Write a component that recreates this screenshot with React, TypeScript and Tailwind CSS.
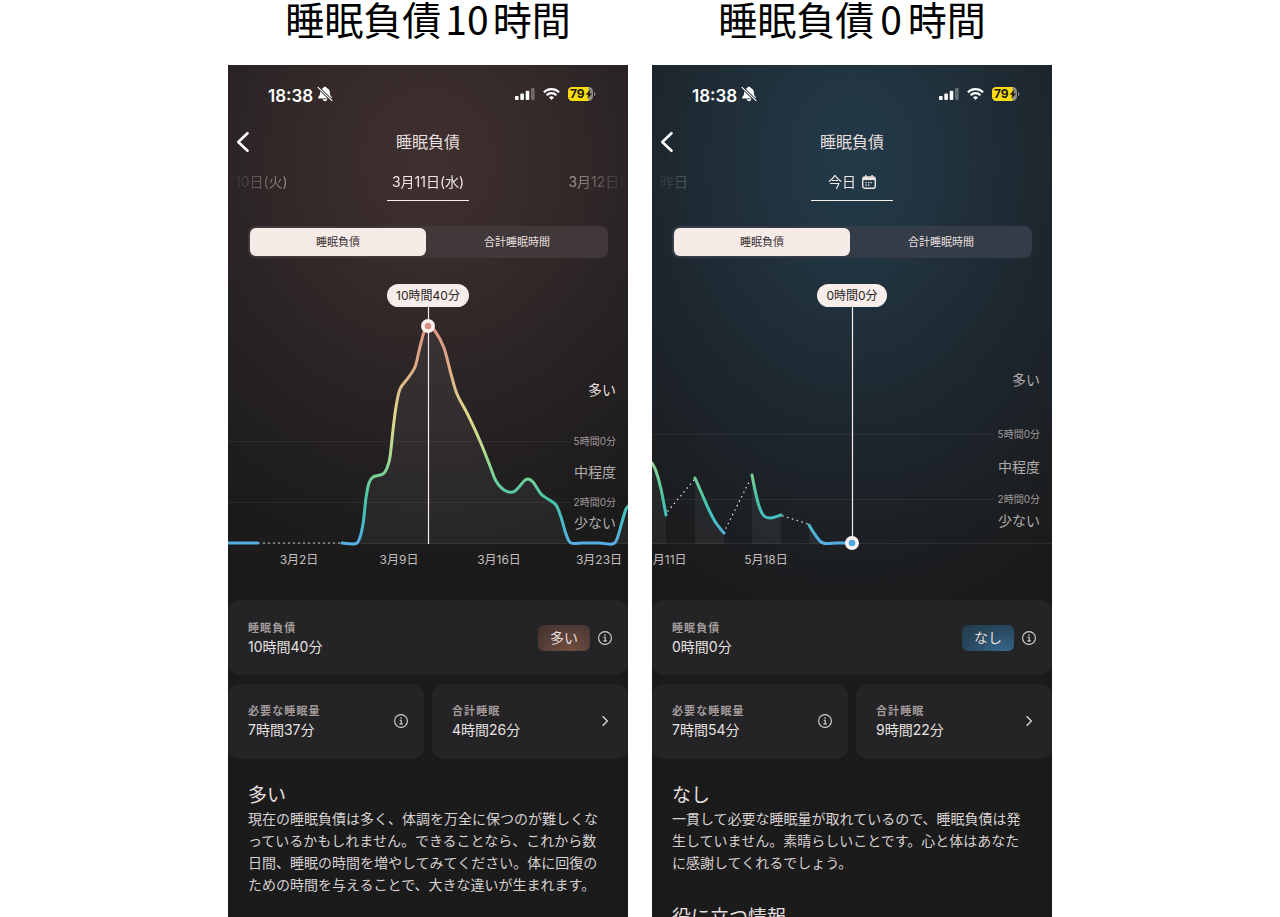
import clsx from 'clsx'

type Point = [number, number]

type Screen = {
    id: string
    count: string
    tone: 'warm' | 'cool'
    days: string[]
    debt: string
    level: string
    need: string
    total: string
    body: string
    tips?: string
    chart: {
        pillWidth: number
        grid: [number, number]
        zones: [number, number, number]
        ticks: [number, string][]
        lines: Point[][]
        dots: [Point, Point][]
        marker: { y: number; color: string }
    }
}

const BASE = 274

const screens: Screen[] = [
    {
        id: 'high',
        count: '10',
        tone: 'warm',
        days: ['3月10日(火)', '3月11日(水)', '3月12日(木)'],
        debt: '10時間40分',
        level: '多い',
        need: '7時間37分',
        total: '4時間26分',
        body: '現在の睡眠負債は多く、体調を万全に保つのが難しくなっているかもしれません。できることなら、これから数日間、睡眠の時間を増やしてみてください。体に回復のための時間を与えることで、大きな違いが生まれます。',
        chart: {
            pillWidth: 82,
            grid: [172, 233],
            zones: [120, 202, 253],
            ticks: [
                [71, '3月2日'],
                [171, '3月9日'],
                [271, '3月16日'],
                [371, '3月23日'],
            ],
            lines: [
                [
                    [0, 273],
                    [30, 273],
                ],
                [
                    [114, 273],
                    [126, 274],
                    [131, 270],
                    [135, 254],
                    [138, 228],
                    [141, 213],
                    [145, 207],
                    [155, 204],
                    [159, 198],
                    [162, 187],
                    [165, 160],
                    [168, 137],
                    [172, 119],
                    [180, 108],
                    [187, 97],
                    [191, 81],
                    [196, 62],
                    [200, 56],
                    [207, 61],
                    [216, 78],
                    [223, 104],
                    [229, 124],
                    [240, 145],
                    [252, 171],
                    [262, 196],
                    [268, 211],
                    [276, 220],
                    [285, 222],
                    [291, 217],
                    [296, 211],
                    [300, 209],
                    [305, 212],
                    [313, 224],
                    [320, 229],
                    [328, 235],
                    [333, 247],
                    [338, 264],
                    [343, 273],
                    [355, 273],
                    [371, 273],
                    [384, 274],
                    [389, 269],
                    [394, 252],
                    [398, 239],
                    [402, 235],
                ],
            ],
            dots: [[[36, 273], [112, 273]]],
            marker: { y: 56, color: '#db8f80' },
        },
    },
    {
        id: 'none',
        count: '0',
        tone: 'cool',
        days: ['昨日', '今日', ''],
        debt: '0時間0分',
        level: 'なし',
        need: '7時間54分',
        total: '9時間22分',
        body: '一貫して必要な睡眠量が取れているので、睡眠負債は発生していません。素晴らしいことです。心と体はあなたに感謝してくれるでしょう。',
        tips: '役に立つ情報',
        chart: {
            pillWidth: 70,
            grid: [165, 230],
            zones: [110, 197, 251],
            ticks: [
                [14, '5月11日'],
                [114, '5月18日'],
            ],
            lines: [
                [
                    [0, 193],
                    [4, 201],
                    [9, 219],
                    [14, 245],
                ],
                [
                    [43, 208],
                    [50, 224],
                    [57, 240],
                    [64, 253],
                    [72, 263],
                ],
                [
                    [100, 205],
                    [103, 220],
                    [107, 236],
                    [112, 246],
                    [119, 248],
                    [129, 245],
                ],
                [
                    [157, 255],
                    [164, 266],
                    [171, 273],
                    [185, 273],
                    [200, 273],
                ],
            ],
            dots: [
                [[16, 241], [42, 210]],
                [[74, 258], [98, 210]],
                [[131, 246], [156, 254]],
            ],
            marker: { y: 273, color: '#4aa5e0' },
        },
    },
]

// Catmull-Rom through the points, written as cubic beziers
function smooth(points: Point[]) {
    let d = `M${points[0][0]} ${points[0][1]}`
    for (let i = 0; i < points.length - 1; i++) {
        const a = points[i - 1] ?? points[i]
        const b = points[i]
        const c = points[i + 1]
        const e = points[i + 2] ?? c
        d += `C${b[0] + (c[0] - a[0]) / 6} ${b[1] + (c[1] - a[1]) / 6} ${c[0] - (e[0] - b[0]) / 6} ${c[1] - (e[1] - b[1]) / 6} ${c[0]} ${c[1]}`
    }
    return d
}

function area(points: Point[]) {
    return `${smooth(points)}V${BASE}H${points[0][0]}Z`
}

function InfoButton({ label }: { label: string }) {
    return (
        <button type="button" aria-label={label} className="shrink-0 text-[#d8d2d2]">
            <svg viewBox="0 0 14 14" className="size-3.5" fill="none" stroke="currentColor">
                <circle cx="7" cy="7" r="6.4" strokeWidth="1.1" />
                <path d="M5.6 6.2h1.6v3.6M5.4 9.9h3.4" strokeWidth="1.1" />
                <circle cx="7" cy="4.1" r=".8" fill="currentColor" stroke="none" />
            </svg>
        </button>
    )
}

function CalendarIcon() {
    return (
        <svg viewBox="0 0 14 14" className="size-3.5" fill="none" stroke="currentColor">
            <rect x=".7" y="2" width="12.6" height="11.3" rx="2.4" strokeWidth="1.4" />
            <path d="M1 3.8h12" strokeWidth="2.6" />
            <path d="M3.9.7v2M10.1.7v2" strokeWidth="1.6" strokeLinecap="round" />
            <path d="M3.4 7.7h7.4M3.4 10.2h5" strokeWidth="1.3" strokeDasharray="1.4 1.1" />
        </svg>
    )
}

function StatusBar({ warm }: { warm: boolean }) {
    return (
        <div className="flex h-[58px] items-center justify-between pr-8 pl-10 text-white">
            <div className="flex items-center gap-1">
                <span className="pt-1 text-[17px] leading-5 font-semibold">18:38</span>
                <svg viewBox="0 0 16 16" className="size-4">
                    <path
                        d="M8 .8c.9 0 1.5.5 1.7 1.2 2.1.7 3.2 2.4 3.2 4.5 0 2.4.6 3.3 1.7 4.4.6.7.2 1.6-.7 1.6H2.1c-.9 0-1.3-.9-.7-1.6 1.1-1.1 1.7-2 1.7-4.4 0-2.1 1.1-3.800 3.200-4.500C6.500 1.300 7.100.8 8 .8zM5.700 13.300h4.600c-.2 1.200-1.100 1.900-2.300 1.900s-2.100-.7-2.300-1.900z"
                        fill="currentColor"
                    />
                    <path d="M1 1.300 15 14.700" stroke={warm ? '#332a2b' : '#1f2d36'} strokeWidth="2.800" />
                    <path d="M1 1.300 15 14.700" stroke="currentColor" strokeWidth="1.100" strokeLinecap="round" />
                </svg>
            </div>
            <div className="flex items-center gap-2">
                <svg viewBox="0 0 20 12" className="h-3 w-5" fill="currentColor">
                    <rect x="0" y="8" width="3.600" height="4" rx="1" />
                    <rect x="5.300" y="5.600" width="3.600" height="6.400" rx="1" />
                    <rect x="10.700" y="2.800" width="3.600" height="9.200" rx="1" />
                    <rect x="16" y="0" width="3.600" height="12" rx="1" opacity=".3" />
                </svg>
                <svg viewBox="0 0 17 12" className="h-3 w-[17px]" fill="none" stroke="currentColor" strokeWidth="2.200">
                    <path d="M.9 4.300a10.900 10.900 0 0 1 15.200 0" />
                    <path d="M3.600 7.200a7 7 0 0 1 9.800 0" />
                    <path d="M8.500 12 6 9.400a3.600 3.600 0 0 1 5 0z" fill="currentColor" stroke="none" />
                </svg>
                <svg viewBox="0 0 28 14" className="h-3.5 w-7">
                    <defs>
                        <clipPath id="battery">
                            <rect width="25" height="14" rx="4.500" />
                        </clipPath>
                    </defs>
                    <g clipPath="url(#battery)">
                        <rect width="25" height="14" fill="#8f8a88" />
                        <rect width="20.500" height="14" fill="#fbdc11" />
                    </g>
                    <path d="M26 5c1 .4 1.300 1.100 1.300 2S27 8.600 26 9z" fill="#8f8a88" />
                    <text x="2" y="11.300" fontSize="12" fontWeight="700" fill="#211a12">
                        79
                    </text>
                    <path d="M22.400 2.400 17.600 7.800h2.700l-1 4L24.200 6.500h-2.700z" fill="#211a12" />
                </svg>
            </div>
        </div>
    )
}

function Chart({ screen }: { screen: Screen }) {
    const { pillWidth, grid, zones, ticks, lines, dots, marker } = screen.chart
    const stroke = `stroke-${screen.id}`
    return (
        <svg viewBox="0 0 400 310" className="mt-3 block w-full" role="img" aria-label={`睡眠負債 ${screen.debt}`}>
            <defs>
                <linearGradient id={stroke} gradientUnits="userSpaceOnUse" x1="0" y1="56" x2="0" y2="274">
                    <stop offset="0" stopColor="#df9584" />
                    <stop offset=".22" stopColor="#dfb088" />
                    <stop offset=".4" stopColor="#e0d88c" />
                    <stop offset=".55" stopColor="#c0dc8e" />
                    <stop offset=".68" stopColor="#7cd295" />
                    <stop offset=".8" stopColor="#45c5a6" />
                    <stop offset=".9" stopColor="#46bcca" />
                    <stop offset="1" stopColor="#57ade4" />
                </linearGradient>
            </defs>
            {grid.map((y) => (
                <path key={y} d={`M0 ${y - 0.5}H342`} stroke="#fff" strokeOpacity=".06" />
            ))}
            <path d={`M0 ${BASE - 0.5}H400`} stroke="#fff" strokeOpacity=".08" />
            {lines.map((line, i) => (
                <path key={i} d={area(line)} fill="#fff" fillOpacity=".05" />
            ))}
            {dots.map(([from, to], i) => (
                <path
                    key={i}
                    d={`M${from[0]} ${from[1]}L${to[0]} ${to[1]}`}
                    stroke="#e9e4e2"
                    strokeWidth="1.600"
                    strokeLinecap="round"
                    strokeDasharray="0 5"
                />
            ))}
            {lines.map((line, i) => (
                <path
                    key={i}
                    d={smooth(line)}
                    fill="none"
                    stroke={line.length === 2 ? '#57ade4' : `url(#${stroke})`}
                    strokeWidth="3"
                    strokeLinecap="round"
                />
            ))}
            <path d={`M200.500 36V${BASE}`} stroke="#f3ecea" strokeWidth="1.200" />
            <circle cx="200" cy={marker.y} r="7" fill="#faf1ee" />
            <circle cx="200" cy={marker.y} r="3.300" fill={marker.color} />
            <rect x={200 - pillWidth / 2} y="14" width={pillWidth} height="23" rx="11.500" fill="#f7eeeb" />
            <text x="200" y="30" fontSize="12" textAnchor="middle" fill="#2b2424">
                {screen.debt}
            </text>
            <g fontSize="14" textAnchor="end" fill="#b1acac">
                <text x="388" y={zones[0] + 5} fill={screen.tone === 'warm' ? '#e6dfdf' : '#b1acac'}>
                    多い
                </text>
                <text x="388" y={zones[1] + 5}>
                    中程度
                </text>
                <text x="388" y={zones[2] + 5}>
                    少ない
                </text>
            </g>
            <g fontSize="10" textAnchor="end" fill="#a09b9b">
                <text x="388" y={grid[0] + 3}>
                    5時間0分
                </text>
                <text x="388" y={grid[1] + 3}>
                    2時間0分
                </text>
            </g>
            <g fontSize="12" textAnchor="middle" fill="#c4bebe">
                {ticks.map(([x, label]) => (
                    <text key={label} x={x} y="294">
                        {label}
                    </text>
                ))}
            </g>
        </svg>
    )
}

function Stat({ label, value }: { label: string; value: string }) {
    return (
        <dl className="pb-0.5">
            <dt className="text-[11px] leading-5 font-semibold tracking-widest text-[#a39b9b]">{label}</dt>
            <dd className="text-sm leading-[18px] text-[#e8e2e2]">{value}</dd>
        </dl>
    )
}

function Phone({ screen }: { screen: Screen }) {
    const warm = screen.tone === 'warm'
    return (
        <article
            className={clsx(
                'flex-1 overflow-hidden bg-[#1b1b1c] text-[#e6dfdf]',
                warm
                    ? 'bg-[radial-gradient(ellipse_360px_400px_at_50%_96px,#3e302e,#382c2b_25%,#292324_60%,#1b1b1c)]'
                    : 'bg-[radial-gradient(ellipse_340px_460px_at_50%_96px,#233a49,#21333f_25%,#1d262d_60%,#1b1b1c)]',
            )}
        >
            <StatusBar warm={warm} />

            <header className="grid h-[38px] grid-cols-[1fr_auto_1fr] items-center">
                <button type="button" aria-label="戻る" className="ml-2 w-4 text-white">
                    <svg viewBox="0 0 16 22" className="h-[22px] w-4" fill="none" stroke="currentColor" strokeWidth="2.600">
                        <path d="M11.500 2.200 2.300 11l9.200 8.800" strokeLinecap="round" strokeLinejoin="round" />
                    </svg>
                </button>
                <h2 className="text-base">睡眠負債</h2>
            </header>

            <nav className="flex justify-center gap-24 overflow-hidden mask-[linear-gradient(to_right,transparent,black_18%,black_84%,transparent)] text-sm">
                {screen.days.map((day, i) =>
                    day ? (
                        <button
                            key={day}
                            type="button"
                            className={clsx(
                                'flex h-10 w-[82px] shrink-0 items-center justify-center gap-1.5 border-b pt-0.5 whitespace-nowrap',
                                i === 1 ? 'border-[#f7eeeb] text-[#efe6e4]' : 'border-transparent',
                                i !== 1 && (warm ? 'text-[#ada2a2]' : 'text-[#7f8a91]'),
                            )}
                        >
                            {day}
                            {day === '今日' && <CalendarIcon />}
                        </button>
                    ) : (
                        <span key={i} className="w-[82px] shrink-0" />
                    ),
                )}
            </nav>

            <div
                className={clsx(
                    'mx-5 mt-[25px] grid h-8 grid-cols-[176fr_182fr] rounded-lg py-0.5 pl-0.5 text-[11px]',
                    warm ? 'bg-[#413839]' : 'bg-[#343c47]',
                )}
            >
                <button type="button" aria-pressed="true" className="rounded-md bg-[#f7ebe8] text-[#3a3132]">
                    睡眠負債
                </button>
                <button type="button" aria-pressed="false">
                    合計睡眠時間
                </button>
            </div>

            <Chart screen={screen} />

            <section className="mt-5 grid grid-cols-2 gap-x-2 gap-y-[9px]">
                <div className="col-span-2 flex h-[75px] items-center rounded-xl bg-[#242426] pr-4 pl-5">
                    <Stat label="睡眠負債" value={screen.debt} />
                    <span
                        className={clsx(
                            'mr-2 ml-auto flex h-[26px] w-[52px] items-center justify-center rounded-md text-sm',
                            warm
                                ? 'bg-[radial-gradient(ellipse_at_60%_100%,#70503f,#5a4039_50%,#3f302f)]'
                                : 'bg-[radial-gradient(ellipse_at_80%_100%,#35688a,#2a4d65_50%,#233947)]',
                        )}
                    >
                        {screen.level}
                    </span>
                    <InfoButton label="睡眠負債について" />
                </div>
                <div className="flex h-[75px] items-center justify-between rounded-xl bg-[#242426] pr-4 pb-0.5 pl-5">
                    <Stat label="必要な睡眠量" value={screen.need} />
                    <InfoButton label="必要な睡眠量について" />
                </div>
                <div className="flex h-[75px] items-center justify-between rounded-xl bg-[#242426] pr-4 pb-0.5 pl-5">
                    <Stat label="合計睡眠" value={screen.total} />
                    <button type="button" aria-label="合計睡眠を見る" className="text-[#e4dede]">
                        <svg viewBox="0 0 14 14" className="size-3.5" fill="none" stroke="currentColor" strokeWidth="1.300">
                            <path d="m4.600 2.200 4.800 4.800-4.800 4.800" />
                        </svg>
                    </button>
                </div>
            </section>

            <section className="px-5 pt-[25px]">
                <h3 className="text-[19px] leading-6">{screen.level}</h3>
                <p className="text-sm leading-[22px] text-[#d6d0d0]">{screen.body}</p>
                {screen.tips && <h3 className="mt-8 text-[19px] leading-6">{screen.tips}</h3>}
            </section>
        </article>
    )
}

export default function App() {
    return (
        <main
            lang="ja"
            className="flex h-screen justify-center overflow-hidden bg-white font-['Inter','Noto_Sans_CJK_JP',sans-serif]"
        >
            <div className="grid w-full max-w-[824px] grid-cols-2 gap-6">
                {screens.map((screen) => (
                    <section key={screen.id} className="flex flex-col">
                        <h1 className="h-[65px] text-center font-['Noto_Sans_CJK_JP',sans-serif] text-[39px] leading-9 whitespace-nowrap text-black">
                            睡眠負債
                            <span className={screen.count.length === 1 ? 'px-1.5' : 'px-1'}>{screen.count}</span>
                            時間
                        </h1>
                        <Phone screen={screen} />
                    </section>
                ))}
            </div>
        </main>
    )
}
